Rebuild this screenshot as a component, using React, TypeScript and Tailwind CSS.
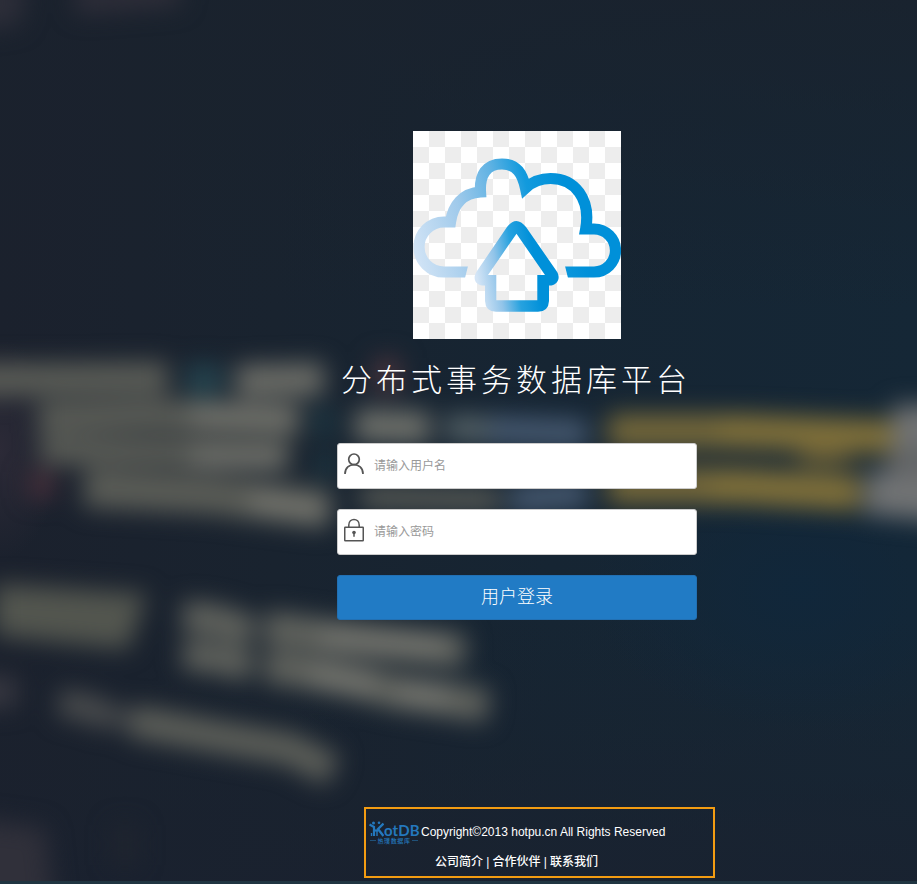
import type { ReactNode } from 'react';

const SANS = "font-['Liberation_Sans','Noto_Sans_CJK_SC',sans-serif]";

function Backdrop() {
  return (
    <svg className="absolute inset-0 h-full w-full" viewBox="0 0 917 884" preserveAspectRatio="none" aria-hidden="true">
      <defs>
        <linearGradient id="base" x1="0" y1="0" x2="1" y2="0">
          <stop offset="0" stopColor="#1b212d" />
          <stop offset="0.3" stopColor="#19232f" />
          <stop offset="0.6" stopColor="#162533" />
          <stop offset="1" stopColor="#152736" />
        </linearGradient>
        <linearGradient id="shade" x1="0" y1="0" x2="0" y2="1">
          <stop offset="0" stopColor="#1a222d" stopOpacity="0.8" />
          <stop offset="0.35" stopColor="#1a222d" stopOpacity="0" />
          <stop offset="0.7" stopColor="#1a222d" stopOpacity="0" />
          <stop offset="1" stopColor="#1a212f" stopOpacity="0.75" />
        </linearGradient>
        <radialGradient id="deep">
          <stop offset="0" stopColor="#10273b" stopOpacity="0.9" />
          <stop offset="1" stopColor="#10273b" stopOpacity="0" />
        </radialGradient>
        <radialGradient id="plum">
          <stop offset="0" stopColor="#2c2a37" />
          <stop offset="1" stopColor="#2c2a37" stopOpacity="0" />
        </radialGradient>
        <filter id="soft" x="-200" y="-200" width="1400" height="1300" filterUnits="userSpaceOnUse" colorInterpolationFilters="sRGB">
          <feGaussianBlur stdDeviation="12.5" />
        </filter>
      </defs>
      <rect width="917" height="884" fill="url(#base)" />
      <rect width="917" height="884" fill="url(#shade)" />
      <ellipse cx="800" cy="590" rx="210" ry="140" fill="url(#deep)" />
      <ellipse cx="0" cy="450" rx="60" ry="110" fill="url(#plum)" />
      <g filter="url(#soft)" fill="none" strokeLinecap="butt">
        <g stroke="#5b5d57" strokeWidth="32">
          <path d="M-40 380 L168 378" />
          <path d="M236 381 L324 379" stroke="#6c6d67" />
          <path d="M38 418 L150 415 L300 420" strokeWidth="31" />
          <path d="M40 450 L150 452 L290 456" strokeWidth="28" />
          <path d="M84 488 L210 495 L330 510" strokeWidth="38" />
          <path d="M355 425 L430 428" stroke="#6f716b" />
          <path d="M445 427 L490 430" stroke="#525f64" strokeWidth="27" />
          <path d="M360 497 L500 500" strokeWidth="22" />
          <path d="M190 415 L296 420 M190 457 L284 458 M250 500 L328 512" stroke="#777770" strokeWidth="20" />
        </g>
        <path d="M186 380 L222 380" stroke="#25444f" strokeWidth="32" />
        <path d="M315 422 L333 422 M318 465 L333 465" stroke="#1f3d48" strokeWidth="26" />
        <path d="M28 485 L55 485" stroke="#472f3a" strokeWidth="26" />
        <path d="M374 375 L400 375" stroke="#4a343c" strokeWidth="34" />
        <path d="M490 430 L588 434 M510 500 L588 493" stroke="#45586f" strokeWidth="29" />
        <path d="M608 431 L740 431 L895 437" stroke="#75683a" strokeWidth="34" />
        <path d="M608 486 L740 486 L861 493" stroke="#75683a" strokeWidth="36" />
        <path d="M720 431 L893 438 M710 487 L855 494" stroke="#84733a" strokeWidth="24" />
        <path d="M800 455 L850 455" stroke="#6c6037" strokeWidth="18" />
        <path d="M893 427 L965 427 M866 492 L970 502" stroke="#717374" strokeWidth="44" />
        <path d="M888 460 L950 465" stroke="#626466" strokeWidth="25" />
        <path d="M0 590 L139 599 L124 643 L0 630 Z" fill="#53564f" stroke="#53564f" strokeWidth="12" />
        <g stroke="#62645e">
          <path d="M183 617 Q220 617 252 634" strokeWidth="31" />
          <path d="M183 655 Q220 657 252 668" strokeWidth="29" />
          <path d="M265 627 Q350 640 465 651" strokeWidth="33" />
          <path d="M265 666 Q340 676 390 691 L488 706" strokeWidth="33" />
          <path d="M320 638 L445 646 M310 674 L378 685 M395 692 L450 697" stroke="#7b7b74" strokeWidth="17" />
          <path d="M59 703 Q85 705 112 718" stroke="#4b4d4e" strokeWidth="27" />
          <path d="M110 715 L140 724" stroke="#44474a" strokeWidth="20" />
          <path d="M132 721 L214 736 L290 749 L333 771" stroke="#5d5f59" strokeWidth="32" />
          <path d="M-40 692 L17 692" stroke="#383841" strokeWidth="30" />
        </g>
        <path d="M-45 -20 L27 -20 L20 25 L-45 32 Z" fill="#2d2e39" />
        <path d="M75 0 L180 -8" stroke="#302f3a" strokeWidth="26" />
        <path d="M-50 815 L45 828 L56 925 L-50 935 Z" fill="#30303a" />
        <path d="M125 825 L125 865" stroke="#20252f" strokeWidth="24" />
      </g>
      <rect y="881" width="917" height="3" fill="#203541" />
    </svg>
  );
}

function CloudLogo() {
  return (
    <svg className="block h-[208px] w-[208px]" viewBox="0 0 208 208" aria-hidden="true">
      <defs>
        <pattern id="checks" width="32" height="32" patternUnits="userSpaceOnUse">
          <rect width="32" height="32" fill="#ffffff" />
          <path d="M16 0h16v16h-16zM0 16h16v16h-16z" fill="#ededed" />
        </pattern>
        <linearGradient id="cloud" gradientUnits="userSpaceOnUse" x1="0" y1="130" x2="160" y2="86">
          <stop offset="0" stopColor="#d4e5f6" />
          <stop offset="0.35" stopColor="#a0caeb" />
          <stop offset="0.6" stopColor="#5fb2e3" />
          <stop offset="0.78" stopColor="#129add" />
          <stop offset="1" stopColor="#0090d9" />
        </linearGradient>
        <linearGradient id="arrow" gradientUnits="userSpaceOnUse" x1="64" y1="148" x2="123" y2="138">
          <stop offset="0" stopColor="#d4e5f6" />
          <stop offset="0.35" stopColor="#91c4e9" />
          <stop offset="0.65" stopColor="#27a2df" />
          <stop offset="1" stopColor="#0090d9" />
        </linearGradient>
      </defs>
      <rect width="208" height="208" fill="url(#checks)" />
      <path
        d="M56 141H31A25 25 0 0 1 31 91H37.500C40 74 50 62 67.500 61C66.500 44 73 33 89 33C104 33 109.500 43 112.500 57Q123 47.500 137.500 47.500C162 47.500 178 68 172.700 98H181A21.500 21.500 0 0 1 181 141H151"
        fill="none"
        stroke="url(#cloud)"
        strokeWidth="11.2"
        strokeLinejoin="miter"
      />
      <path d="M55 135 52 147H58V134ZM152 135 155 147H149V134Z" fill="url(#checks)" />
      <path
        fill="url(#arrow)"
        fillRule="evenodd"
        d="M94 96Q103.3 84 113 96L143.5 140C149 148 143 155 136 154.5V170Q135.500 180.7 125 180.7H83Q72.500 180.7 72 170V154.500C62 155 59 147 64 140ZM103.500 102.700 75 144H83.300V169.300H124.300V144H132Z"
      />
    </svg>
  );
}

function UserIcon() {
  return (
    <svg className="h-6 w-6 shrink-0" viewBox="0 0 24 24" fill="none" stroke="#555555" strokeWidth="1.7" aria-hidden="true">
      <circle cx="12" cy="7.300" r="5.300" />
      <path d="M3 22C3 9.500 21 9.500 21 22" />
    </svg>
  );
}

function LockIcon() {
  return (
    <svg className="h-6 w-6 shrink-0" viewBox="0 0 24 24" fill="none" stroke="#555555" strokeWidth="1.5" aria-hidden="true">
      <rect x="2.750" y="9.250" width="18.500" height="13.500" rx="0.500" />
      <path d="M6.800 9V7C6.800-.4 17.200-.4 17.200 7V9" />
      <circle cx="12" cy="14.500" r="1.800" fill="#555555" stroke="none" />
      <path d="M12 15V18.700" />
    </svg>
  );
}

function Field({ icon, type, placeholder }: { icon: ReactNode; type: string; placeholder: string }) {
  return (
    <label className="flex h-[46px] w-full items-center rounded-[3px] border border-[#cccccc] bg-white pl-1">
      <span className="-mt-1 flex">{icon}</span>
      <input
        type={type}
        placeholder={placeholder}
        className="ml-2 h-full min-w-0 flex-1 bg-transparent text-xs text-gray-700 outline-none placeholder:text-[#999999]"
      />
    </label>
  );
}

function HotDBLogo() {
  return (
    <div className="flex h-[24px] w-[50px] shrink-0 flex-col text-[#2478bd]">
      <div className="flex h-[16px] items-start">
        <svg className="h-4 w-[15px] shrink-0" viewBox="0 0 15 16" fill="none" stroke="#2478bd" aria-hidden="true">
          <path d="M0.500 3.500 5 6V15" strokeWidth="2.200" />
          <path d="M14.500 2.500 9 8 14.500 15" strokeWidth="2.400" />
          <path d="M5 9.500H9" strokeWidth="2.200" />
          <path d="M8 10V15M2.500 12V15" strokeWidth="1.400" />
          <circle cx="4.500" cy="2" r="1.500" fill="#2478bd" stroke="none" />
          <circle cx="10" cy="1.800" r="1.300" fill="#2478bd" stroke="none" />
        </svg>
        <span className="font-['Lato',sans-serif] text-[15px] leading-[18px] font-bold tracking-[0.1px]">otDB</span>
      </div>
      <div className="flex h-2 items-center justify-center gap-px">
        <span className="h-px w-[6px] bg-[#205178]" />
        <span className="text-[6px] leading-[8px] font-medium tracking-[0.6px] whitespace-nowrap">热璞数据库</span>
        <span className="h-px w-[6px] bg-[#205178]" />
      </div>
    </div>
  );
}

export default function App() {
  return (
    <div className={`relative h-[884px] w-full overflow-hidden bg-[#18232f] ${SANS}`}>
      <Backdrop />
      <div className="relative flex h-full flex-col">
        <main className="ml-[337px] flex w-[360px] flex-col items-center pt-[131px]">
          <CloudLogo />
          <h1 className="mt-[19px] h-[45px] w-full whitespace-nowrap pl-[4px] text-[31px] leading-[46px] font-light tracking-[4px] text-white">
            分布式事务数据库平台
          </h1>
          <form className="mt-10 flex w-full flex-col gap-5">
            <Field icon={<UserIcon />} type="text" placeholder="请输入用户名" />
            <Field icon={<LockIcon />} type="password" placeholder="请输入密码" />
            <button type="button" className="h-[45px] w-full rounded-[3px] border border-[#2270b3] bg-[#217bc5] pb-[2px] text-lg leading-[40px] font-light text-white">
              用户登录
            </button>
          </form>
        </main>
        <footer className="mt-auto mb-[6px] ml-[364px] flex h-[71px] w-[351px] flex-col border-2 border-[#f39c12] pt-[8px] text-xs text-white">
          <div className="flex h-[30px] items-center pl-[3px]">
            <span className="mt-[1px] flex"><HotDBLogo /></span>
            <span className="ml-[2px] whitespace-nowrap">Copyright©2013 hotpu.cn All Rights Reserved</span>
          </div>
          <nav className="flex h-[29px] items-center gap-[3.2px] pl-[69px] font-medium whitespace-nowrap">
            <a>公司简介</a>
            <span>|</span>
            <a>合作伙伴</a>
            <span>|</span>
            <a>联系我们</a>
          </nav>
        </footer>
      </div>
    </div>
  );
}
